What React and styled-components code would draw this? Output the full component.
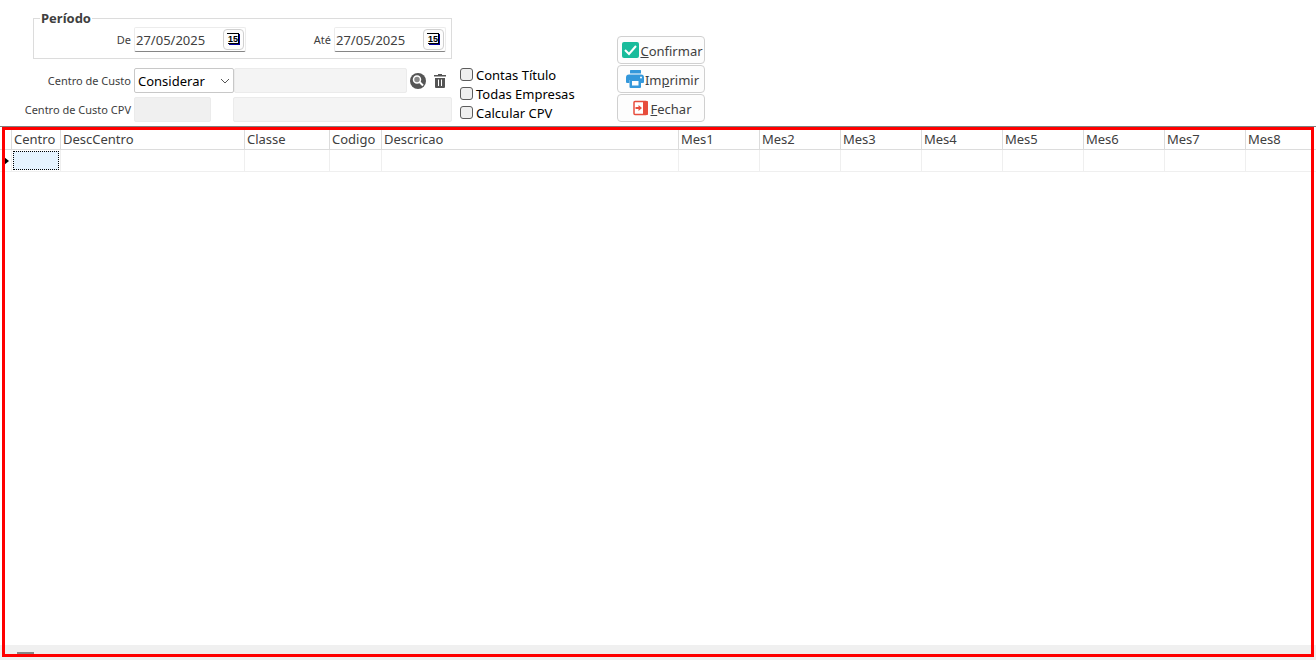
import React from 'react'
import styled, { createGlobalStyle } from 'styled-components'

const columns = [
  { name: 'Centro', width: 49 },
  { name: 'DescCentro', width: 184 },
  { name: 'Classe', width: 85 },
  { name: 'Codigo', width: 52 },
  { name: 'Descricao', width: 297 },
  { name: 'Mes1', width: 81 },
  { name: 'Mes2', width: 81 },
  { name: 'Mes3', width: 81 },
  { name: 'Mes4', width: 81 },
  { name: 'Mes5', width: 81 },
  { name: 'Mes6', width: 81 },
  { name: 'Mes7', width: 81 },
  { name: 'Mes8' },
]

const options = ['Contas Título', 'Todas Empresas', 'Calcular CPV']

function DateField({ id, label }) {
  return (
    <>
      <Label htmlFor={id}>{label}</Label>
      <DateBox>
        <DateInput id={id} type="text" defaultValue="27/05/2025" />
        <CalendarButton type="button" aria-label="Abrir calendário">
          <svg width="13" height="13" viewBox="0 0 13 13">
            <path d="M0 0h12v1H0z" fill="#000" />
            <path d="M11 1h1v10h-1zM1 10h11v1H1z" fill="#000" />
            <path d="M12 1h1v11H2v-1h10z" fill="#0000a0" />
            <text x="1" y="9" fontSize="9" fontWeight="700" fontFamily="Liberation Sans, sans-serif">15</text>
          </svg>
        </CalendarButton>
      </DateBox>
    </>
  )
}

function CheckIcon() {
  return (
    <svg width="17" height="18" viewBox="0 0 17 18">
      <rect y="1" width="17" height="16" rx="2" fill="#1abc9c" />
      <path d="M3 9l4 4 7-8" fill="none" stroke="#fff" strokeWidth="2" />
    </svg>
  )
}

function PrintIcon() {
  return (
    <svg width="18" height="18" viewBox="0 0 18 18" fill="#3498db">
      <rect x="4" y="0" width="11" height="3.5" rx="0.5" />
      <path d="M3 4.5h12a3 3 0 0 1 3 3V12a1 1 0 0 1-1 1h-2v-3H3.5v3H1a1 1 0 0 1-1-1V7.5a3 3 0 0 1 3-3z" />
      <path d="M3.5 10H15v7a1 1 0 0 1-1 1H4.5a1 1 0 0 1-1-1z" />
      <path d="M6 11h6.5v4.500H6z" fill="#fdfdfd" />
      <circle cx="15" cy="7.5" r="1" fill="#fdfdfd" />
    </svg>
  )
}

function CloseIcon() {
  return (
    <svg width="16" height="16" viewBox="0 0 16 16">
      <rect x="1" y="1.5" width="13" height="13" rx="1" fill="#fff" stroke="#e74c3c" strokeWidth="1.5" />
      <path d="M10 1h4a1 1 0 0 1 1 1v12a1 1 0 0 1-1 1h-4z" fill="#e74c3c" />
      <path d="M2.5 7h3V5L9 8l-3.500 3V9h-3z" fill="#e74c3c" />
    </svg>
  )
}

export default function App() {
  return (
    <Page>
      <GlobalStyle />
      <Toolbar>
        <Filters>
          <Period>
            <legend>Período</legend>
            <DateField id="de" label="De" />
            <DateField id="ate" label="Até" />
          </Period>
          <Row>
            <Label htmlFor="centro">Centro de Custo</Label>
            <SelectBox>
              <Select id="centro" defaultValue="Considerar">
                <option>Considerar</option>
                <option>Desconsiderar</option>
              </Select>
              <svg width="10" height="6" viewBox="0 0 10 6">
                <path d="M1 1l4 4 4-4" fill="none" stroke="#555" />
              </svg>
            </SelectBox>
            <Field $grow aria-label="Centros selecionados" disabled />
            <IconButton type="button" aria-label="Pesquisar">
              <svg width="16" height="16" viewBox="0 0 16 16">
                <circle cx="8" cy="8" r="8" fill="#555" />
                <circle cx="7" cy="6.5" r="3.5" fill="#888" stroke="#fff" strokeWidth="1.5" />
                <path d="M9.5 9l3.500 3.500" stroke="#fff" strokeWidth="2" />
              </svg>
            </IconButton>
            <IconButton type="button" aria-label="Limpar">
              <svg width="12" height="14" viewBox="0 0 12 14" fill="#555">
                <path d="M0 1h4V0h4v1h4v1.500H0z" />
                <path fillRule="evenodd" d="M1 4h10v9a1 1 0 0 1-1 1H2a1 1 0 0 1-1-1zM4 5.500v6.500h1V5.500zM7 5.500v6.500h1V5.500z" />
              </svg>
            </IconButton>
          </Row>
          <Row>
            <Label htmlFor="cpv">Centro de Custo CPV</Label>
            <Field id="cpv" $code disabled />
            <Field $grow aria-label="Descrição do centro CPV" disabled />
          </Row>
        </Filters>
        <Checks>
          {options.map((text) => (
            <Check key={text}>
              <input type="checkbox" />
              {text}
            </Check>
          ))}
        </Checks>
        <Actions>
          <Action type="button"><CheckIcon /><span><u>C</u>onfirmar</span></Action>
          <Action type="button"><PrintIcon /><span>Im<u>p</u>rimir</span></Action>
          <Action type="button"><CloseIcon /><span><u>F</u>echar</span></Action>
        </Actions>
      </Toolbar>
      <GridPanel>
        <Table>
          <colgroup>
            <Col $width={12} />
            {columns.map((col) => <Col key={col.name} $width={col.width} />)}
          </colgroup>
          <thead>
            <tr>
              <th />
              {columns.map((col) => <th key={col.name}>{col.name}</th>)}
            </tr>
          </thead>
          <tbody>
            <tr>
              <td>
                <Marker width="5" height="8" viewBox="0 0 5 8">
                  <path d="M0 0l5 4-5 4z" />
                </Marker>
              </td>
              {columns.map((col, i) => <td key={col.name}>{i === 0 && <Selected />}</td>)}
            </tr>
          </tbody>
        </Table>
        <ScrollBar><Thumb /></ScrollBar>
        <Highlight />
      </GridPanel>
    </Page>
  )
}

const GlobalStyle = createGlobalStyle`
  * {
    box-sizing: border-box;
  }
  body {
    margin: 0;
    background: #fff;
  }
  body, input, select, button {
    font-family: 'Noto Sans', sans-serif;
    font-size: 13px;
    line-height: 18px;
    color: #404040;
  }
`
const Page = styled.div`
  display: flex;
  flex-direction: column;
  height: 100vh;
`
const Toolbar = styled.div`
  display: flex;
  padding: 9px 0 4px;
`
const Filters = styled.div`
  display: flex;
  flex-direction: column;
  gap: 4px;
  width: 452px;
`
const Period = styled.fieldset`
  display: flex;
  margin: 0 0 5px 33px;
  padding: 0 5px 6px 0;
  border: 1px solid #dcdcdc;
  justify-content: space-between;

  legend {
    margin-left: 6px;
    padding: 0 1px;
    font-weight: 700;
  }
`
const Row = styled.div`
  display: flex;
  align-items: center;
`
const Label = styled.label`
  flex: none;
  width: 131px;
  margin-right: 3px;
  font-size: 11px;
  line-height: 25px;
  text-align: right;

  ${Period} & {
    width: 97px;
  }
  ${Period} & ~ & {
    width: 85px;
  }
`
const DateBox = styled.div`
  display: flex;
  align-items: center;
  width: 112px;
  height: 25px;
  border: 1px solid #ececec;
  border-bottom-color: #868686;
  border-radius: 2px;
`
const DateInput = styled.input`
  flex: 1;
  min-width: 0;
  padding: 0 1px;
  border: 0;
  background: none;
`
const CalendarButton = styled.button`
  display: flex;
  align-items: center;
  justify-content: center;
  width: 21px;
  height: 21px;
  margin-right: 1px;
  padding: 0;
  border: 1px solid #d0d0d0;
  border-radius: 4px;
  background: #fdfdfd;
`
const SelectBox = styled.div`
  position: relative;
  width: 100px;

  svg {
    position: absolute;
    top: 10px;
    right: 4px;
    pointer-events: none;
  }
`
const Select = styled.select`
  display: block;
  appearance: none;
  width: 100%;
  height: 25px;
  padding: 0 3px;
  border: 1px solid #c8c8c8;
  border-radius: 2px;
  background: #fff;
  color: #000;
`
const Field = styled.input`
  width: ${(p) => (p.$code ? '77px' : 'auto')};
  flex: ${(p) => (p.$grow ? 1 : 'none')};
  min-width: 0;
  height: 25px;
  margin-right: ${(p) => (p.$code ? '22px' : 0)};
  border: 1px solid #ebebeb;
  border-radius: 2px;
  background: ${(p) => (p.$code ? '#f0f0f0' : '#f4f4f4')};
`
const IconButton = styled.button`
  display: flex;
  align-items: center;
  justify-content: center;
  width: 22px;
  height: 22px;
  padding: 0;
  border: 0;
  background: none;

  &:last-child {
    margin-right: 1px;
  }
`
const Checks = styled.div`
  margin: 56px 0 0 8px;
  width: 157px;
`
const Check = styled.label`
  display: flex;
  align-items: center;
  gap: 3px;
  height: 19px;
  color: #000;

  input {
    appearance: none;
    width: 13px;
    height: 13px;
    margin: 0;
    border: 1px solid #5c5c5c;
    border-radius: 3px;
    background: #efefef;
  }
  input:checked {
    background: #3498db;
  }
`
const Actions = styled.div`
  display: flex;
  flex-direction: column;
  gap: 1px;
  width: 88px;
  margin-top: 27px;
`
const Action = styled.button`
  display: flex;
  align-items: center;
  justify-content: center;
  gap: 1px;
  height: 28px;
  padding: 0 0 0 3px;
  border: 1px solid #d0d0d0;
  border-radius: 4px;
  background: #fdfdfd;

  span {
    padding-top: 2px;
  }
`
const GridPanel = styled.div`
  position: relative;
  flex: 1;
  display: flex;
  flex-direction: column;
  overflow: hidden;
  border-top: 1px solid #808080;
`
const Table = styled.table`
  table-layout: fixed;
  width: 100%;
  border-collapse: separate;
  border-spacing: 0;

  th, td {
    height: 23px;
    padding: 2px 2px 0;
    border-right: 1px solid #dcdcdc;
    border-bottom: 1px solid #dcdcdc;
    font-weight: 400;
    text-align: left;
  }
  td {
    height: 22px;
    padding: 0;
    border-color: #efefef;
  }
  th:last-child, td:last-child {
    border-right: 0;
  }
`
const Col = styled.col`
  width: ${(p) => (p.$width ? `${p.$width}px` : 'auto')};
`
const Marker = styled.svg`
  display: block;
  margin-left: 4px;
`
const Selected = styled.div`
  height: 19px;
  margin: 0 1px;
  border: 1px dotted #000;
  background: #e5f3ff;
`
const ScrollBar = styled.div`
  height: 15px;
  margin-top: auto;
  padding: 7px 17px 0;
  background: #f0f0f0;
`
const Thumb = styled.div`
  width: 17px;
  height: 2px;
  background: #868686;
`
const Highlight = styled.div`
  position: absolute;
  inset: 0 2px 3px;
  border: 3px solid #f00;
  pointer-events: none;
`
